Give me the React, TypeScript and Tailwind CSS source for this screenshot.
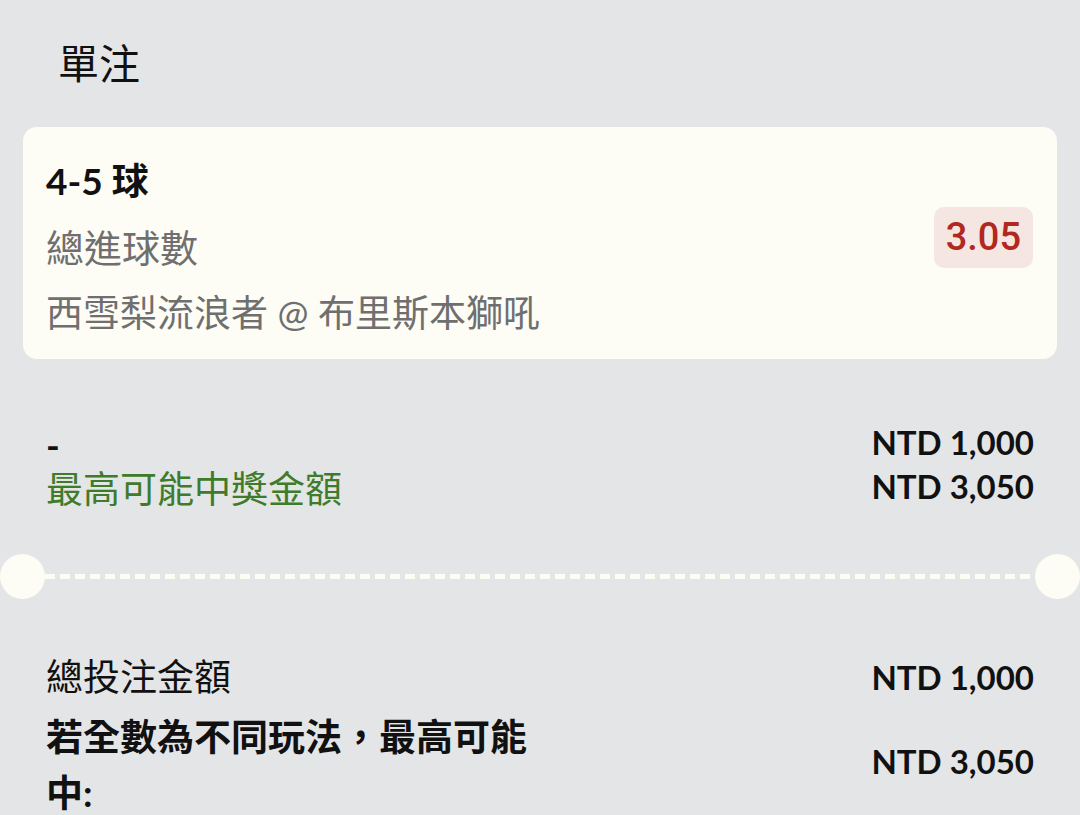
import React from 'react';

const font = { fontFamily: 'Lato, "Noto Sans CJK TC", sans-serif' };

/**
 * BetSlip
 * Single bet summary: selection card, stake / potential win and totals
 */
export default function App() {
  return (
    <div
      style={font}
      className="w-[1080px] h-[815px] overflow-hidden bg-[#e4e5e7] text-[#111]"
    >
      {/* Title */}
      <div className="pl-[58px] pt-[34px] text-[41px] leading-[60px]">單注</div>

      {/* Selection card */}
      <div className="mx-[23px] mt-[33px] flex items-start justify-between rounded-[14px] bg-[#fdfcf5] pl-[23px] pr-[24px] pt-[21px] pb-[13px]">
        <div className="text-[37px] leading-[66px]">
          <div className="font-bold">4-5 球</div>
          <div className="text-[38px] text-[#6f6f6f]">總進球數</div>
          <div className="text-[#6f6f6f]">西雪梨流浪者 @ 布里斯本獅吼</div>
        </div>
        <div className="mt-[59px] rounded-[10px] bg-[#f6e6e1] px-[12px] font-['Roboto'] text-[38px] leading-[61px] font-medium text-[#b1281f]">
          3.05
        </div>
      </div>

      {/* Stake and potential win */}
      <div className="mt-[61px] flex justify-between pl-[46px] pr-[46px] text-[37px] leading-[44px]">
        <div className="mt-[3px]">
          <div className="font-bold">-</div>
          <div className="text-[#3e7b2a]">最高可能中獎金額</div>
        </div>
        <div className="text-right text-[33px] font-bold">
          <div>NTD 1,000</div>
          <div>NTD 3,050</div>
        </div>
      </div>

      {/* Perforated divider */}
      <div className="mt-[43px] flex items-center">
        <div className="h-[45px] w-[45px] shrink-0 rounded-full bg-[#fdfcf5]" />
        <div className="h-[5px] flex-1 bg-[repeating-linear-gradient(90deg,#fdfcf5_0_10px,transparent_10px_15px)]" />
        <div className="h-[45px] w-[45px] shrink-0 rounded-full bg-[#fdfcf5]" />
      </div>

      {/* Totals */}
      <div className="mt-[50px] flex flex-col gap-[4px] pl-[46px] pr-[46px] text-[37px] leading-[56px]">
        <div className="flex items-center justify-between">
          <div>總投注金額</div>
          <div className="text-[33px] font-bold">NTD 1,000</div>
        </div>
        <div className="flex items-center justify-between">
          <div className="w-[500px] font-bold">若全數為不同玩法，最高可能中:</div>
          <div className="mb-[8px] text-[33px] font-bold">NTD 3,050</div>
        </div>
      </div>
    </div>
  );
}
